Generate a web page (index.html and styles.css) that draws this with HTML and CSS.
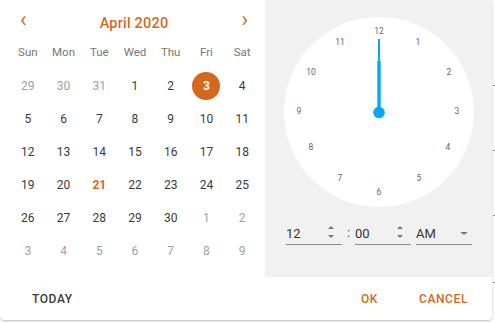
FILE: index.html
```html
<!DOCTYPE html>
<html>
<head>
<meta charset="utf-8">
<link rel="stylesheet" href="styles.css">
</head>
<body>
<div class="page">
  <div class="dialog">
    <div class="main">
      <div class="calendar">
        <div class="cal-header">
          <span class="nav">&#8249;</span>
          <span class="month">April 2020</span>
          <span class="nav">&#8250;</span>
        </div>
        <div class="grid weekdays">
          <span>Sun</span><span>Mon</span><span>Tue</span><span>Wed</span><span>Thu</span><span>Fri</span><span>Sat</span>
        </div>
        <div class="grid days">
          <span class="out">29</span><span class="out">30</span><span class="out">31</span><span>1</span><span>2</span><span class="sel"><b>3</b></span><span>4</span>
          <span>5</span><span>6</span><span>7</span><span>8</span><span>9</span><span>10</span><span>11</span>
          <span>12</span><span>13</span><span>14</span><span>15</span><span>16</span><span>17</span><span>18</span>
          <span>19</span><span>20</span><span class="today">21</span><span>22</span><span>23</span><span>24</span><span>25</span>
          <span>26</span><span>27</span><span>28</span><span>29</span><span>30</span><span class="out">1</span><span class="out">2</span>
          <span class="out">3</span><span class="out">4</span><span class="out">5</span><span class="out">6</span><span class="out">7</span><span class="out">8</span><span class="out">9</span>
        </div>
      </div>
      <div class="clockpanel">
        <svg class="clock" width="190" height="190" viewBox="0 0 190 190">
          <circle cx="95" cy="95" r="95" fill="#fff"/>
          <g class="nums" font-family="Roboto, sans-serif" font-size="8.5" fill="#666" text-anchor="middle" dominant-baseline="central">
            <text x="95" y="14">12</text>
            <text x="134" y="25">1</text>
            <text x="165" y="55">2</text>
            <text x="173" y="94">3</text>
            <text x="164" y="130">4</text>
            <text x="135" y="161">5</text>
            <text x="95" y="175">6</text>
            <text x="56" y="161">7</text>
            <text x="27" y="130">8</text>
            <text x="15" y="94">9</text>
            <text x="27" y="55">10</text>
            <text x="56" y="25">11</text>
          </g>
          <rect x="94" y="22" width="2" height="23" fill="#03a9f4"/>
          <rect x="93.3" y="44" width="3.4" height="52" fill="#03a9f4"/>
          <circle cx="95" cy="95.5" r="5.8" fill="#03a9f4"/>
        </svg>
        <div class="timerow">
          <div class="field">
            <span class="val">12</span>
            <span class="spin"><i class="up"></i><i class="down"></i></span>
          </div>
          <span class="colon">:</span>
          <div class="field">
            <span class="val">00</span>
            <span class="spin"><i class="up"></i><i class="down"></i></span>
          </div>
          <div class="field ampm">
            <span class="val">AM</span>
            <i class="drop"></i>
          </div>
        </div>
      </div>
    </div>
    <div class="actions">
      <span class="btn today-btn">TODAY</span>
      <span class="spacer"></span>
      <span class="btn accent ok">OK</span>
      <span class="btn accent cancel">CANCEL</span>
    </div>
  </div>
  <div class="edge">
    <i></i><i></i><i></i><i></i>
  </div>
</div>
</body>
</html>
```

FILE: styles.css
```css
* { box-sizing: border-box; }
html, body { margin: 0; padding: 0; background: #fff; }
body { font-family: Roboto, "Liberation Sans", sans-serif; color: #333; }

.page { display: flex; width: 495px; height: 323px; overflow: hidden; }

.dialog {
  width: 492px;
  height: 320px;
  background: #fff;
  border-radius: 0 0 4px 4px;
  box-shadow: 0 1px 3px rgba(0,0,0,0.2), 0 1px 1px rgba(0,0,0,0.08);
  display: flex;
  flex-direction: column;
  flex: none;
}

.main { display: flex; height: 277px; }

.calendar { width: 265px; padding: 10px 5px 0 10px; }

.cal-header {
  height: 24px;
  display: flex;
  align-items: center;
  justify-content: space-between;
  padding: 0 12px 0 10px;
  color: #d2691e;
}
.nav { font-size: 22px; line-height: 24px; margin-top: -4px; font-weight: 400; }
.month { font-size: 14.5px; font-weight: 500; letter-spacing: 0.2px; margin-top: 3px; }

.grid { display: grid; grid-template-columns: repeat(7, 1fr); width: 250px; }
.grid span { display: flex; align-items: center; justify-content: center; }

.weekdays { margin-top: 8px; height: 20px; font-size: 11.5px; color: #777; }
.days { margin-top: 7.5px; grid-auto-rows: 33px; font-size: 12px; color: #3a3a3a; }
.days .out { color: #a0a0a0; }
.days .today { color: #d2691e; font-weight: 700; }
.days .sel b {
  width: 28px; height: 28px; border-radius: 50%;
  background: #d2691e; color: #fff; font-weight: 700;
  display: flex; align-items: center; justify-content: center;
}

.clockpanel { flex: 1; background: #f1f1f1; padding: 17px 0 0 19px; }
.clock { display: block; }

.timerow { display: flex; align-items: flex-end; margin: 14px 0 0 2px; }
.field {
  width: 56px; height: 24px;
  border-bottom: 1px solid #8a8a8a;
  display: flex; align-items: center; justify-content: space-between;
  padding: 0 6px 0 0;
  font-size: 13px; color: #333;
}
.field .val { padding-left: 0; margin-top: 2px; }
.colon { width: 13px; text-align: center; font-size: 13px; color: #555; padding-bottom: 5px; }
.ampm { margin-left: 5px; padding-right: 4px; }

.spin { display: flex; flex-direction: column; gap: 6px; align-items: center; margin-top: -2px; margin-right: 2px; }
.spin i, .drop { display: block; width: 0; height: 0; border-left: 3.5px solid transparent; border-right: 3.5px solid transparent; }
.spin .up { border-bottom: 3px solid #777; }
.spin .down { border-top: 3px solid #777; }
.drop { border-top: 3.5px solid #777; border-left-width: 4px; border-right-width: 4px; margin-top: 2px; }

.actions { flex: 1; display: flex; align-items: center; padding: 0 24px 0 32px; }
.btn { font-size: 12px; font-weight: 500; letter-spacing: 0.6px; }
.today-btn { color: #3a3a3a; }
.spacer { flex: 1; }
.accent { color: #d2691e; }
.ok { margin-right: 41px; }

.edge { flex: 1; }
.edge i { display: block; height: 1px; background: #888; margin-left: 1px; width: 3px; }
.edge i:nth-child(1) { margin-top: 85px; }
.edge i:nth-child(2) { margin-top: 64px; }
.edge i:nth-child(3) { margin-top: 64px; }
.edge i:nth-child(4) { margin-top: 66px; }
```
